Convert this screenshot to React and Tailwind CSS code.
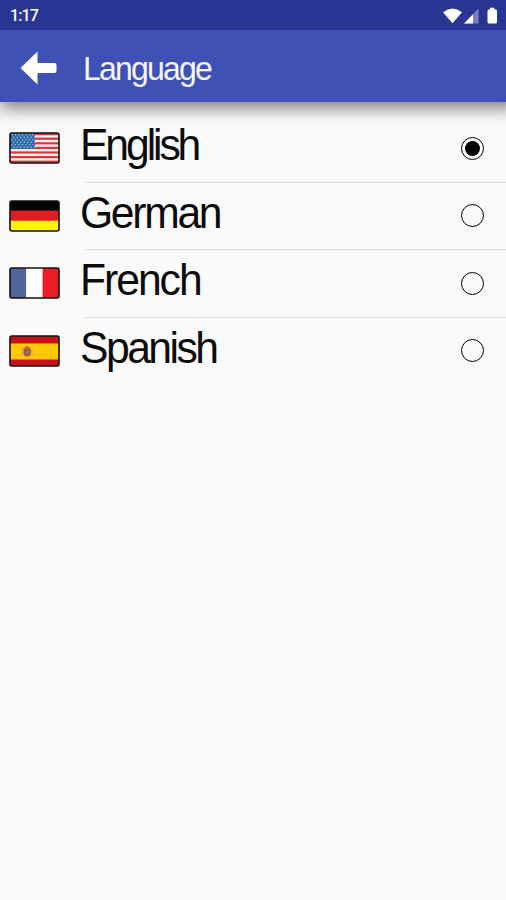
import React, { useState } from 'react';

const UsaFlag = () => (
  <>
    <rect width="51" height="32" fill="#fbeeee" />
    {[0, 1, 2, 3, 4, 5, 6].map((i) => (
      <rect key={i} y={1 + i * 4.6} width="51" height="2.2" fill="#d9363e" />
    ))}
    <rect width="26" height="17" fill="#2f6cab" />
    {[0, 1, 2, 3, 4, 5].map((row) =>
      [0, 1, 2, 3, 4, 5, 6].map((col) => (
        <circle
          key={`${row}-${col}`}
          cx={3 + col * 3.5 + (row % 2) * 1.7}
          cy={2.8 + row * 2.5}
          r="0.7"
          fill="#a9cbe6"
        />
      ))
    )}
  </>
);

const GermanyFlag = () => (
  <>
    <rect width="51" height="11" fill="#000000" />
    <rect y="10.5" width="51" height="10.5" fill="#e01b22" />
    <rect y="20.7" width="51" height="11.3" fill="#fff200" />
  </>
);

const FranceFlag = () => (
  <>
    <rect width="17.5" height="32" fill="#50659c" />
    <rect x="17.2" width="16.6" height="32" fill="#ffffff" />
    <rect x="33.6" width="17.4" height="32" fill="#ec1c24" />
  </>
);

const SpainFlag = () => (
  <>
    <rect width="51" height="32" fill="#c8101a" />
    <rect y="8.5" width="51" height="16" fill="#ffc800" />
    <rect x="12.4" y="13" width="1.4" height="8" fill="#d3ae70" />
    <rect x="22.4" y="13" width="1.4" height="8" fill="#d3ae70" />
    <path d="M14.5 13.5 H21.8 V18.5 Q21.8 21.5 18.2 21.5 Q14.5 21.5 14.5 18.5 Z" fill="#a8563c" />
    <rect x="15.6" y="11.4" width="5" height="2.4" rx="1" fill="#b9603a" />
    <rect x="17.2" y="15" width="3.4" height="3.6" fill="#8b7480" />
  </>
);

const languages = [
  { name: 'English', Flag: UsaFlag, spacing: 'tracking-[-3.2px]' },
  { name: 'German', Flag: GermanyFlag, spacing: 'tracking-[-2.4px]' },
  { name: 'French', Flag: FranceFlag, spacing: 'tracking-[-2.1px]' },
  { name: 'Spanish', Flag: SpainFlag, spacing: 'tracking-[-2.6px]' },
];

const StatusBar = () => (
  <div className="relative z-10 h-[30px] bg-[#283593] flex items-center justify-between pl-[10px] pr-[8px] text-white">
    <span className="font-[Roboto,sans-serif] text-[16px] font-medium leading-none tracking-[-0.9px] pt-[2px]">1:17</span>
    <svg width="56" height="18" viewBox="0 0 56 18" className="mt-[1px]">
      <path d="M1 5.2 Q10.5 -2.2 20 5.2 L10.5 16.3 Z" fill="#ffffff" />
      <path d="M36.5 1.5 V16.5 H22 Z" fill="#7780bb" />
      <path d="M31 7.3 V16.5 H22 Z" fill="#ffffff" />
      <path d="M45.5 4 Q45.5 2.6 47 2.6 H48 V0.8 H52.5 V2.6 H53.5 Q55 2.6 55 4 V15 Q55 16.5 53.5 16.5 H47 Q45.5 16.5 45.5 15 Z" fill="#ffffff" />
    </svg>
  </div>
);

const App = () => {
  const [selected, setSelected] = useState('English');

  return (
    <div className="min-h-screen overflow-x-hidden bg-[#fafafa] font-['Liberation_Sans',Arial,sans-serif]">
      <StatusBar />

      <header className="h-[72px] bg-[#3f51b5] flex items-center pl-[20px] shadow-[6px_0_16px_6px_rgba(0,0,0,0.5)]">
        <button type="button" aria-label="Back" className="mt-[3px]">
          <svg width="37" height="34" viewBox="0 0 37 34">
            <path d="M0.5 17 L17.5 0.5 V12 H34.5 Q36.5 12 36.5 14 V20 Q36.5 22 34.5 22 H17.5 V33.5 Z" fill="#ffffff" />
          </svg>
        </button>
        <h1 className="ml-[26px] mt-[4px] origin-left scale-x-[0.97] text-[33px] leading-none tracking-[-1.85px] text-[#f4f5ff]">Language</h1>
      </header>

      <ul className="pt-[13px]">
        {languages.map(({ name, Flag, spacing }, index) => (
          <li key={name}>
            <button
              type="button"
              onClick={() => setSelected(name)}
              className="w-full h-[66.5px] flex items-center pl-[9px] pr-[22px]"
            >
              <svg width="51" height="32" viewBox="0 0 51 32">
                <Flag />
                <rect x="0.2" y="0.2" width="50.6" height="31.6" rx="2.5" fill="none" stroke="#fafafa" strokeWidth="1.6" />
                <rect x="1" y="1" width="49" height="30" rx="2" fill="none" stroke="#15100f" strokeWidth="1.6" />
              </svg>
              <span className={`ml-[20px] -mt-[6px] origin-left scale-x-[0.97] text-[44px] leading-none text-[#0c0c0c] ${spacing}`}>{name}</span>
              <span className="ml-auto size-[23px] rounded-full border-[1.5px] border-black flex items-center justify-center">
                {selected === name && <span className="size-[15px] rounded-full bg-black" />}
              </span>
            </button>
            {index < languages.length - 1 && <div className="ml-[85px] h-px bg-[#dcdcdc]" />}
          </li>
        ))}
      </ul>
    </div>
  );
};

export default App;
